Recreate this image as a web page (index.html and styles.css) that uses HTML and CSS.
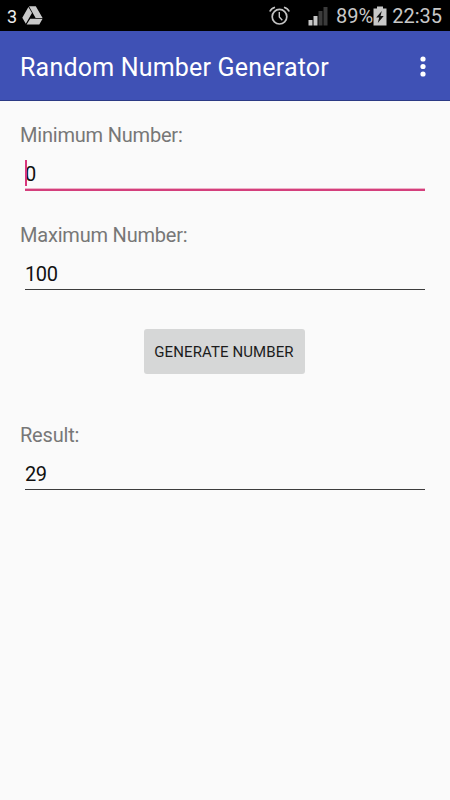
FILE: index.html
```html
<!DOCTYPE html>
<html lang="en">
<head>
  <meta charset="UTF-8">
  <title>Random Number Generator</title>
  <meta name="viewport" content="width=device-width, initial-scale=1.0">
  <link rel="stylesheet" href="styles.css">
</head>
<body>
  <div class="status-bar">
    <span class="count">3</span>
    <svg class="drive" width="21" height="19" viewBox="0 0 21 19">
      <path fill="#c8c8c8" d="M7 0.3h6.8l6.8 11.7h-7zM6.4 0.9l3.6 6-6.2 10.9-3.5-6zM8.2 12.7h12.4l-3.3 5.7H4.6z"/>
    </svg>
    <svg class="alarm" width="21" height="20" viewBox="0 0 21 20" fill="none" stroke="#c4c4c4">
      <circle cx="10.5" cy="10.7" r="7.3" stroke-width="1.7"/>
      <path stroke-width="1.4" d="M10.3 6v5l3 3.3"/>
      <path stroke-width="1.7" d="M0.8 5.5Q2.2 2.3 6 1.2M20.2 5.5Q18.8 2.3 15 1.2"/>
    </svg>
    <svg class="signal" width="20" height="20" viewBox="0 0 20 20">
      <path fill="#c8c8c8" d="M0.5 14h4v5.5h-4zM5.5 10h4v9.5h-4z"/>
      <path fill="#3b3b3b" d="M10.5 5h4v14.5h-4zM15.5 1h4v18.5h-4z"/>
    </svg>
    <span class="percent">89%</span>
    <svg class="battery" width="14" height="20" viewBox="0 0 14 20">
      <path fill="#c8c8c8" d="M4 0.5h6v2h3.5v17H0.5v-17H4z"/>
      <path fill="#111" d="M8.8 5L3.2 11.5h3L4.8 17l5.9-7H7.5z"/>
    </svg>
    <span class="clock">22:35</span>
  </div>

  <header class="app-bar">
    <h1>Random Number Generator</h1>
    <svg width="6" height="22" viewBox="0 0 6 22" fill="#fff">
      <circle cx="3" cy="3" r="2.6"/>
      <circle cx="3" cy="10.5" r="2.6"/>
      <circle cx="3" cy="18" r="2.6"/>
    </svg>
  </header>

  <main class="content">
    <div class="field focused">
      <label for="min">Minimum Number:</label>
      <div class="input-wrap">
        <input type="text" id="min" value="0">
        <span class="caret"></span>
      </div>
    </div>

    <div class="field">
      <label for="max">Maximum Number:</label>
      <div class="input-wrap">
        <input type="text" id="max" value="100">
      </div>
    </div>

    <div class="actions">
      <button onclick="generateNumber()">GENERATE NUMBER</button>
    </div>

    <div class="field">
      <label for="result">Result:</label>
      <div class="input-wrap">
        <input type="text" id="result" value="29">
      </div>
    </div>
  </main>

  <script>
    function generateNumber() {
      const min = parseInt(document.getElementById("min").value, 10);
      const max = parseInt(document.getElementById("max").value, 10);
      document.getElementById("result").value = Math.floor(Math.random() * (max - min + 1)) + min;
    }
  </script>
</body>
</html>
```
FILE: styles.css
```css
* {
  box-sizing: border-box;
}
html, body {
  height: 100%;
  margin: 0;
  font-family: Roboto, sans-serif;
  background: #fafafa;
}
body {
  display: flex;
  flex-direction: column;
  overflow: hidden;
}

/* Status bar */
.status-bar {
  flex: none;
  height: 31px;
  padding: 0 8px 0 7px;
  display: flex;
  align-items: center;
  background: #000;
  color: #c8c8c8;
  font-size: 20px;
}
.count {
  font-size: 18px;
  color: #eee;
  margin-right: 5px;
  padding-top: 1px;
}
.percent, .clock {
  padding-top: 1px;
}
.alarm {
  margin-left: auto;
  margin-right: 18px;
}
.signal {
  margin-right: 8px;
}
.clock {
  margin-left: 5px;
}

/* App bar */
.app-bar {
  flex: none;
  height: 70px;
  padding: 2px 24px 0 20px;
  display: flex;
  align-items: center;
  justify-content: space-between;
  background: #3f51b5;
  border-bottom: 1px solid #2c3a85;
}
h1 {
  margin: 0;
  padding-top: 1px;
  font-size: 25px;
  font-weight: 400;
  letter-spacing: 0.2px;
  color: #fff;
}

/* Form */
.content {
  padding: 20px;
}
.field {
  height: 100px;
}
label {
  display: block;
  height: 28px;
  line-height: 28px;
  font-size: 20px;
  letter-spacing: -0.2px;
  color: #777;
}
.input-wrap {
  position: relative;
  margin: 0 5px;
}
input {
  display: block;
  width: 100%;
  height: 41px;
  padding: 9px 0 0;
  border: 0;
  border-bottom: 1px solid #3c3c3c;
  outline: none;
  background: none;
  font-family: inherit;
  font-size: 20px;
  letter-spacing: -0.4px;
  color: #111;
}
.focused input {
  height: 42px;
  border-bottom: 2px solid #d43f7c;
  box-shadow: inset 0 -1px #eeb0c8;
}
.caret {
  position: absolute;
  left: 0;
  top: 11px;
  width: 2px;
  height: 26px;
  background: #d8367c;
}
.actions {
  height: 100px;
  padding: 8px 2px 0 0;
  display: flex;
  justify-content: center;
  align-items: flex-start;
}
button {
  width: 161px;
  height: 45px;
  padding: 0;
  border: 0;
  border-radius: 3px;
  background: #d6d7d7;
  font-family: inherit;
  font-size: 15px;
  letter-spacing: 0.1px;
  color: #1c1c1c;
  white-space: nowrap;
}
```
